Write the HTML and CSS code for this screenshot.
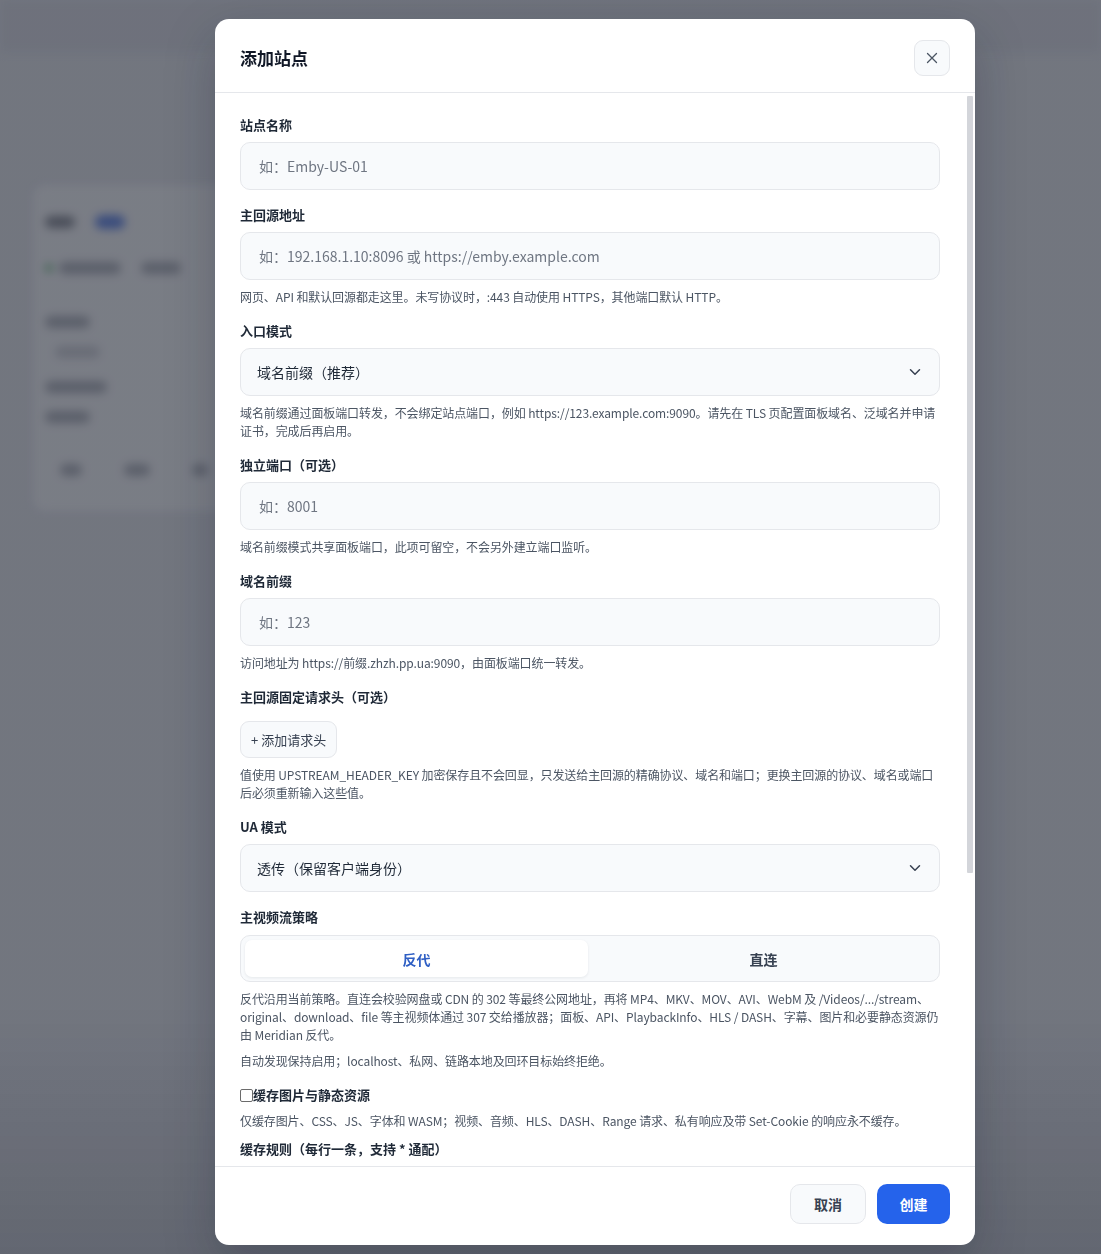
FILE: index.html
```html
<!DOCTYPE html>
<html lang="zh-CN">
<head>
<meta charset="utf-8">
<title>添加站点</title>
<link rel="stylesheet" href="styles.css">
</head>
<body>
<div class="page">
  <div class="topbar"></div>
  <div class="card">
    <div class="row r1"><span class="blob dark w30"></span><span class="blob blue w30"></span></div>
    <div class="row r2"><span class="dot"></span><span class="blob w60"></span><span class="blob w40"></span></div>
    <div class="row r3"><span class="blob w45"></span></div>
    <div class="row r4 indent"><span class="blob light w45"></span></div>
    <div class="row r5"><span class="blob w60"></span></div>
    <div class="row r6"><span class="blob w45"></span></div>
    <div class="row r7 spread"><span class="blob w20"></span><span class="blob w25"></span><span class="blob w15"></span></div>
  </div>
</div>

<div class="overlay">
  <div class="modal">
    <div class="modal-header">
      <h2 class="modal-title">添加站点</h2>
      <button class="close-btn" type="button" aria-label="关闭">
        <svg width="12" height="12" viewBox="0 0 12 12" fill="none"><path d="M1.5 1.5L10.5 10.5M10.5 1.5L1.5 10.5" stroke="#4b5563" stroke-width="1.3" stroke-linecap="round"/></svg>
      </button>
    </div>

    <div class="modal-body">
      <div class="field">
        <label class="label">站点名称</label>
        <input class="input" type="text" placeholder="如：Emby-US-01">
      </div>

      <div class="field">
        <label class="label">主回源地址</label>
        <input class="input" type="text" placeholder="如：192.168.1.10:8096 或 https://emby.example.com">
        <p class="help">网页、API 和默认回源都走这里。未写协议时，:443 自动使用 HTTPS，其他端口默认 HTTP。</p>
      </div>

      <div class="field">
        <label class="label">入口模式</label>
        <div class="select">
          <span>域名前缀（推荐）</span>
          <svg width="12" height="8" viewBox="0 0 12 8" fill="none"><path d="M1.5 1.75L6 6.25L10.5 1.75" stroke="#374151" stroke-width="1.5" stroke-linecap="round" stroke-linejoin="round"/></svg>
        </div>
        <p class="help">域名前缀通过面板端口转发，不会绑定站点端口，例如 https://123.example.com:9090。请先在 TLS 页配置面板域名、泛域名并申请证书，完成后再启用。</p>
      </div>

      <div class="field">
        <label class="label">独立端口（可选）</label>
        <input class="input" type="text" placeholder="如：8001">
        <p class="help">域名前缀模式共享面板端口，此项可留空，不会另外建立端口监听。</p>
      </div>

      <div class="field">
        <label class="label">域名前缀</label>
        <input class="input" type="text" placeholder="如：123">
        <p class="help">访问地址为 https://前缀.zhzh.pp.ua:9090，由面板端口统一转发。</p>
      </div>

      <div class="field">
        <label class="label">主回源固定请求头（可选）</label>
        <div class="btn-row"><button class="add-btn" type="button">+ 添加请求头</button></div>
        <p class="help">值使用 UPSTREAM_HEADER_KEY 加密保存且不会回显，只发送给主回源的精确协议、域名和端口；更换主回源的协议、域名或端口后必须重新输入这些值。</p>
      </div>

      <div class="field">
        <label class="label">UA 模式</label>
        <div class="select">
          <span>透传（保留客户端身份）</span>
          <svg width="12" height="8" viewBox="0 0 12 8" fill="none"><path d="M1.5 1.75L6 6.25L10.5 1.75" stroke="#374151" stroke-width="1.5" stroke-linecap="round" stroke-linejoin="round"/></svg>
        </div>
      </div>

      <div class="field">
        <label class="label">主视频流策略</label>
        <div class="segmented">
          <button class="seg active" type="button">反代</button>
          <button class="seg" type="button">直连</button>
        </div>
        <p class="help">反代沿用当前策略。直连会校验网盘或 CDN 的 302 等最终公网地址，再将 MP4、MKV、MOV、AVI、WebM 及 /Videos/.../stream、original、download、file 等主视频体通过 307 交给播放器；面板、API、PlaybackInfo、HLS / DASH、字幕、图片和必要静态资源仍由 Meridian 反代。</p>
        <p class="help">自动发现保持启用；localhost、私网、链路本地及回环目标始终拒绝。</p>
      </div>

      <div class="field">
        <label class="check-label"><input class="check" type="checkbox">缓存图片与静态资源</label>
        <p class="help">仅缓存图片、CSS、JS、字体和 WASM；视频、音频、HLS、DASH、Range 请求、私有响应及带 Set-Cookie 的响应永不缓存。</p>
      </div>

      <div class="field tight">
        <label class="label">缓存规则（每行一条，支持 * 通配）</label>
        <textarea class="textarea"></textarea>
      </div>
    </div>
    <div class="scroll-thumb"></div>

    <div class="modal-footer">
      <button class="btn btn-cancel" type="button">取消</button>
      <button class="btn btn-primary" type="button">创建</button>
    </div>
  </div>
</div>
</body>
</html>
```

FILE: styles.css
```css
* { box-sizing: border-box; }

html, body {
  margin: 0;
  height: 100%;
  overflow: hidden;
}

body {
  font-family: "Noto Sans CJK SC", "Noto Sans", sans-serif;
  background: #e8eaee;
  color: #1f2937;
}

/* blurred background page */
.page {
  height: 100%;
  display: flex;
  flex-direction: column;
  filter: blur(5px);
}

.topbar {
  height: 52px;
  background: #dfe1e6;
  flex: none;
}

.card {
  margin: 133px 0 0 33px;
  width: 930px;
  height: 326px;
  background: #f9fafb;
  border-radius: 12px;
  padding: 29px 12px 0 12px;
  display: flex;
  flex-direction: column;
}

.row {
  display: flex;
  align-items: center;
  gap: 20px;
  height: 16px;
  flex: none;
}
.r2 { margin-top: 30px; }
.r3 { margin-top: 38px; }
.r4 { margin-top: 14px; }
.r5 { margin-top: 19px; }
.r6 { margin-top: 14px; }
.r7 { margin-top: 37px; }
.row.indent { padding-left: 10px; }
.row.spread { gap: 42px; padding-left: 15px; }

.blob {
  height: 12px;
  border-radius: 6px;
  background: #b5b8bf;
}
.blob.dark { background: #8e9199; }
.blob.light { background: #d3d5da; }
.blob.blue { background: #6d8fe8; height: 14px; border-radius: 7px; }
.w15 { width: 16px; }
.w20 { width: 22px; }
.w25 { width: 26px; }
.w30 { width: 30px; }
.w40 { width: 40px; }
.w45 { width: 45px; }
.w60 { width: 62px; }

.dot {
  width: 8px;
  height: 8px;
  border-radius: 50%;
  background: #7fc48e;
  margin-right: -14px;
}

/* overlay + modal */
.overlay {
  position: fixed;
  inset: 0;
  background: linear-gradient(180deg, rgba(17, 22, 36, 0.55) 0%, rgba(17, 22, 36, 0.55) 80%, rgba(17, 22, 36, 0.62) 100%);
  display: flex;
  align-items: flex-start;
  padding: 19px 0 0 215px;
}

.modal {
  position: relative;
  width: 760px;
  height: 1226px;
  background: #ffffff;
  border-radius: 14px;
  box-shadow: 0 20px 50px rgba(15, 23, 42, 0.25);
  display: flex;
  flex-direction: column;
  overflow: hidden;
}

.modal-header {
  flex: none;
  height: 74px;
  padding: 4px 25px 0;
  border-bottom: 1px solid #e5e7eb;
  display: flex;
  align-items: center;
  justify-content: space-between;
}

.modal-title {
  margin: 0;
  font-size: 17px;
  font-weight: 700;
  color: #111827;
  line-height: 24px;
}

.close-btn {
  width: 36px;
  height: 36px;
  border: 1px solid #e5e7eb;
  border-radius: 9px;
  background: #f8fafc;
  display: flex;
  align-items: center;
  justify-content: center;
  padding: 0;
  cursor: pointer;
}

.modal-body {
  flex: 1;
  overflow-y: auto;
  scrollbar-width: none;
  padding: 23px 35px 24px 25px;
  display: flex;
  flex-direction: column;
  gap: 16px;
}
.modal-body::-webkit-scrollbar { display: none; }

.scroll-thumb {
  position: absolute;
  top: 77px;
  right: 2px;
  width: 6px;
  height: 777px;
  background: #d3d5da;
  border-radius: 1px;
}

.field {
  display: flex;
  flex-direction: column;
  flex: none;
}
.field.tight { margin-top: -6px; }

.label {
  font-size: 13px;
  font-weight: 700;
  line-height: 18px;
  color: #1f2937;
  margin-bottom: 8px;
}

.input, .select, .textarea {
  width: 100%;
  height: 48px;
  border: 1px solid #e5e7eb;
  border-radius: 10px;
  background: #f8fafc;
  font-family: inherit;
  font-size: 14px;
  color: #1f2937;
  outline: none;
}

.input {
  padding: 0 18px;
}
.input::placeholder { color: #6f7682; }

.select {
  padding: 0 18px 0 16px;
  display: flex;
  align-items: center;
  justify-content: space-between;
}

.textarea {
  height: 120px;
  padding: 12px 18px;
  resize: none;
}

.help {
  margin: 8px 0 0;
  font-size: 12px;
  line-height: 18px;
  letter-spacing: -0.1px;
  color: #4b5563;
}

.btn-row {
  display: flex;
  margin-top: 7px;
}

.add-btn {
  height: 37px;
  padding: 0 10px;
  border: 1px solid #e5e7eb;
  border-radius: 9px;
  background: #f8fafc;
  font-family: inherit;
  font-size: 13px;
  color: #374151;
  cursor: pointer;
}

.segmented {
  height: 47px;
  margin-top: 1px;
  border: 1px solid #e5e7eb;
  border-radius: 10px;
  background: #f8fafc;
  padding: 4px;
  display: grid;
  grid-template-columns: 1fr 1fr;
  gap: 4px;
}

.seg {
  border: 0;
  border-radius: 7px;
  background: transparent;
  font-family: inherit;
  font-size: 14px;
  font-weight: 700;
  color: #374151;
  cursor: pointer;
}

.seg.active {
  background: #ffffff;
  color: #2f5fc4;
  box-shadow: 0 1px 3px rgba(15, 23, 42, 0.08);
}

.check-label {
  display: flex;
  align-items: center;
  font-size: 13px;
  font-weight: 700;
  line-height: 18px;
  color: #1f2937;
}

.check {
  appearance: none;
  -webkit-appearance: none;
  width: 13px;
  height: 13px;
  margin: 0;
  border: 1px solid #6b6b6b;
  border-radius: 2px;
  background: #ffffff;
}

.modal-footer {
  flex: none;
  height: 79px;
  border-top: 1px solid #e5e7eb;
  padding: 17px 25px 0;
  display: flex;
  justify-content: flex-end;
  align-items: flex-start;
  gap: 11px;
}

.btn {
  height: 40px;
  border-radius: 10px;
  font-family: inherit;
  font-size: 14px;
  font-weight: 700;
  cursor: pointer;
}

.btn-cancel {
  width: 76px;
  border: 1px solid #e5e7eb;
  background: #f8fafc;
  color: #374151;
}

.btn-primary {
  width: 73px;
  border: 0;
  background: #2563eb;
  color: #ffffff;
}
```
